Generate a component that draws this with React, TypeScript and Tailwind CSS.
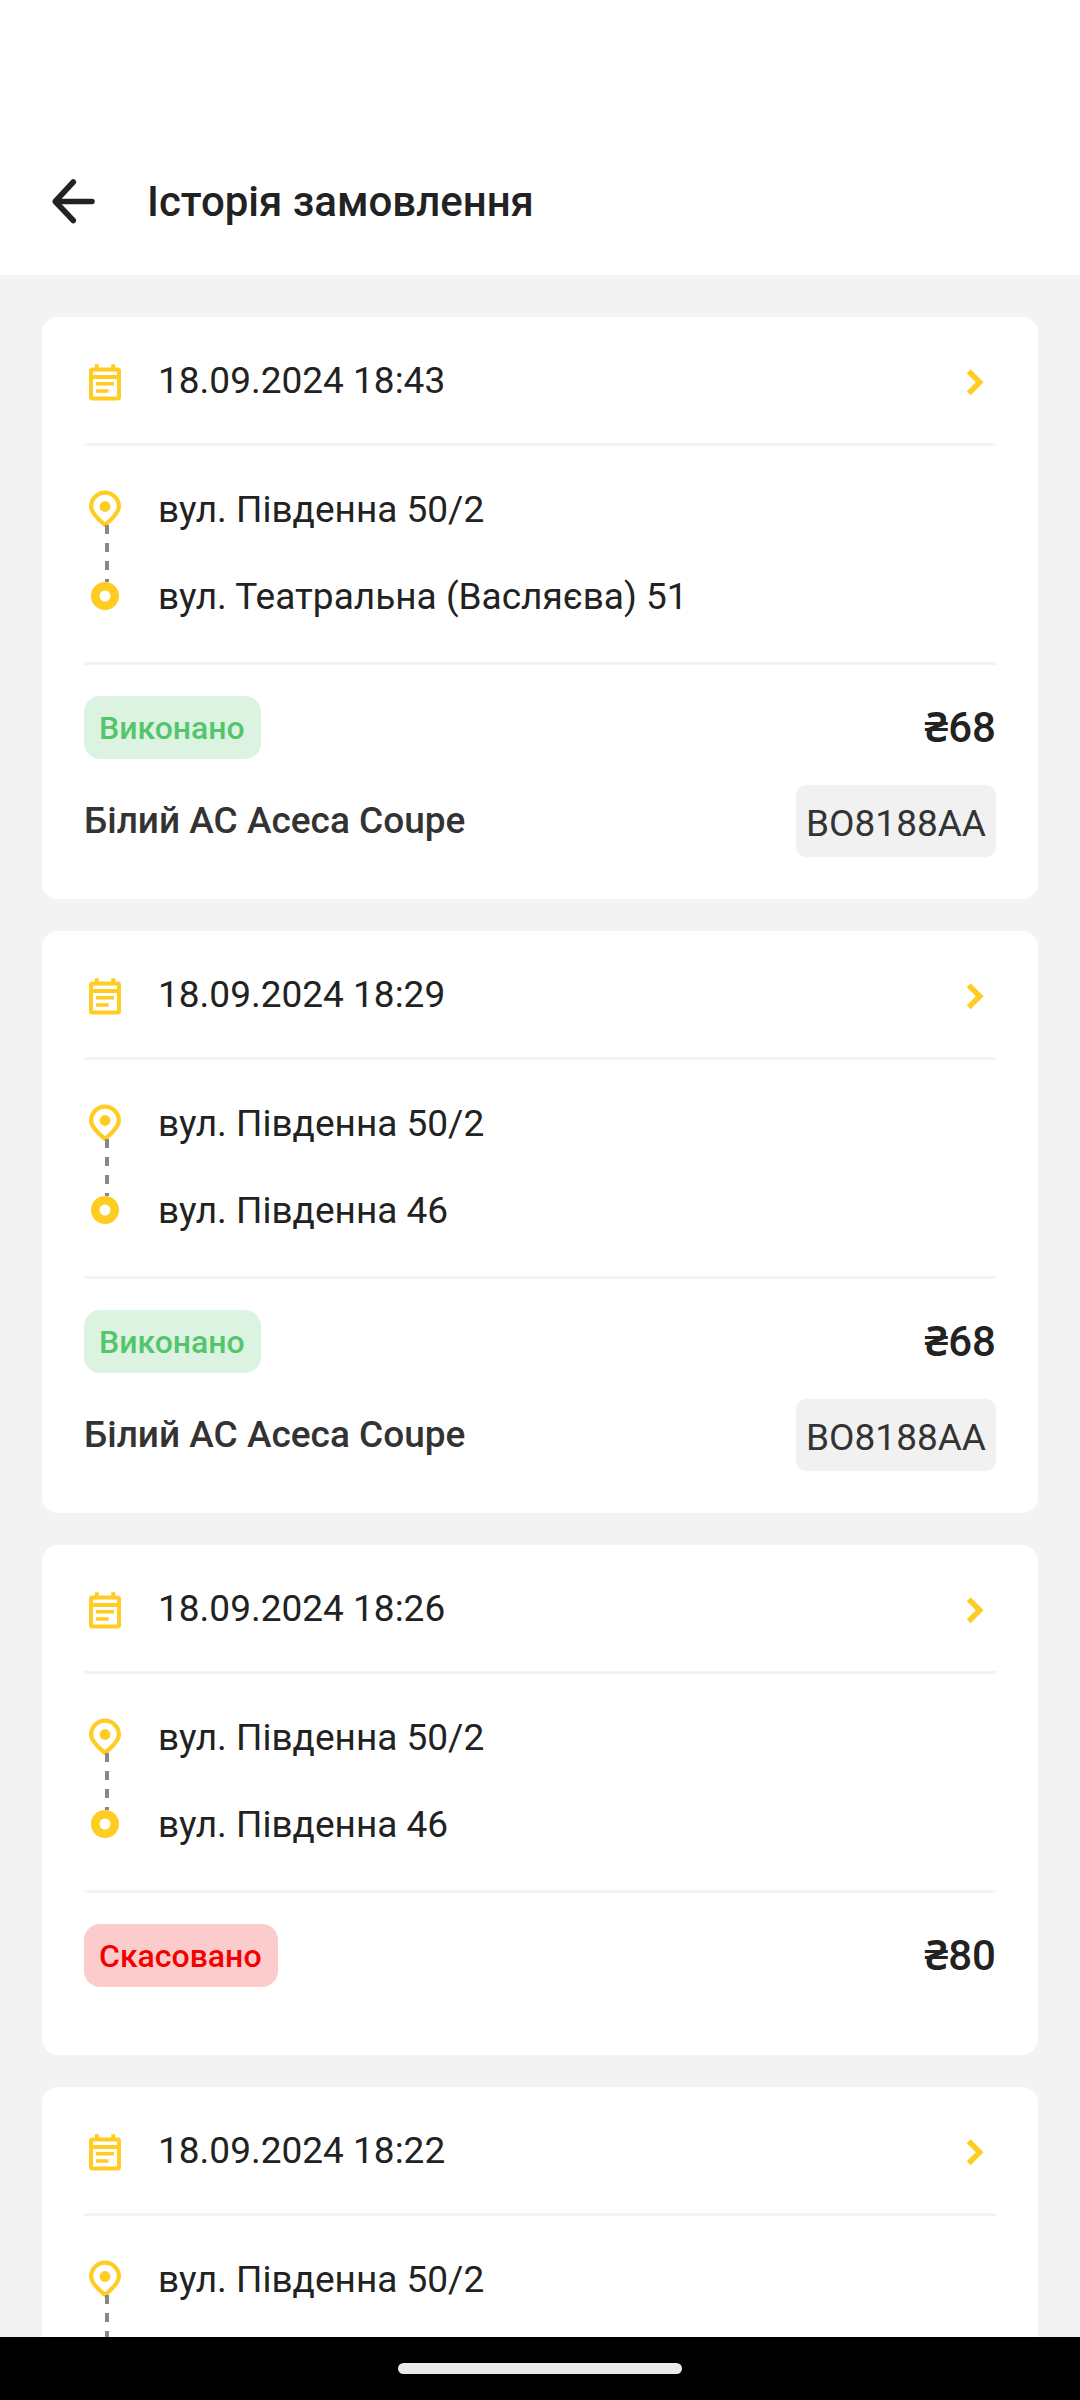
import React from 'react';

type Status = 'done' | 'cancelled';

interface Order {
  id: number;
  date: string;
  stops: string[];
  status?: Status;
  price?: number;
  car?: string;
  plate?: string;
}

const orders: Order[] = [
  {
    id: 1,
    date: '18.09.2024 18:43',
    stops: ['вул. Південна 50/2', 'вул. Театральна (Васляєва) 51'],
    status: 'done',
    price: 68,
    car: 'Білий AC Aceca Coupe',
    plate: 'BO8188AA',
  },
  {
    id: 2,
    date: '18.09.2024 18:29',
    stops: ['вул. Південна 50/2', 'вул. Південна 46'],
    status: 'done',
    price: 68,
    car: 'Білий AC Aceca Coupe',
    plate: 'BO8188AA',
  },
  {
    id: 3,
    date: '18.09.2024 18:26',
    stops: ['вул. Південна 50/2', 'вул. Південна 46'],
    status: 'cancelled',
    price: 80,
  },
  {
    id: 4,
    date: '18.09.2024 18:22',
    stops: ['вул. Південна 50/2'],
  },
];

const badges = {
  done: { label: 'Виконано', className: 'bg-[#dcf3e2] text-[#53c66c]' },
  cancelled: { label: 'Скасовано', className: 'bg-[#fccccc] text-[#f40000]' },
};

const ArrowLeft = () => (
  <svg width="63" height="63" viewBox="0 0 63 63" fill="none" stroke="currentColor" strokeWidth="5.6" strokeLinecap="round" strokeLinejoin="round">
    <path d="M50 31.5H14M31.3 12L13.2 31.5l18.1 19" />
  </svg>
);

const CalendarIcon = () => (
  <svg className="shrink-0" width="42" height="42" viewBox="0 0 42 42" fill="none" stroke="#ffcc22" strokeWidth="4">
    <rect x="7" y="9.5" width="28" height="29" rx="1.5" />
    <path d="M12.8 4.3v5M29.2 4.3v5M6 17h30" />
    <path d="M12 23.8h18M12 31.1h12.5" strokeWidth="3.5" />
  </svg>
);

const ChevronRight = () => (
  <svg width="42" height="42" viewBox="0 0 42 42" fill="none" stroke="#ffcc22" strokeWidth="5.5">
    <path d="M14.7 11.2L25.7 22.2L14.7 33.2" />
  </svg>
);

// Pin on top, dashed line, ring at the destination
const RouteIcon = () => (
  <svg className="shrink-0" width="42" height="129" viewBox="0 0 42 129" fill="none">
    <path
      d="M21 37C18 34.5 7.1 25.5 7.1 18.5a13.9 13.9 0 0 1 27.8 0C34.9 25.5 24 34.5 21 37Z"
      stroke="#ffcc22"
      strokeWidth="4.2"
      strokeLinejoin="round"
    />
    <circle cx="21" cy="18.5" r="5.4" fill="#ffcc22" />
    <path d="M23 37v57" stroke="#888888" strokeWidth="4" strokeDasharray="9 9" />
    <circle cx="21" cy="108" r="9.75" stroke="#ffcc22" strokeWidth="8.5" />
  </svg>
);

const OrderCard = ({ order }: { order: Order }) => {
  const badge = order.status && badges[order.status];

  return (
    <li className="rounded-2xl bg-white px-[42px]">
      <div className="flex items-center gap-8 border-b-3 border-[#f3f3f3] pt-[42px] pb-[41px]">
        <CalendarIcon />
        <span className="flex-1 text-[37px] leading-[43px]">{order.date}</span>
        <button aria-label="Деталі" className="cursor-pointer">
          <ChevronRight />
        </button>
      </div>

      <div className="flex items-start gap-8 pt-[42px] pb-11">
        <RouteIcon />
        <div className="flex min-h-[130px] flex-col gap-11 text-[37px] leading-[43px]">
          {order.stops.map((stop) => (
            <span key={stop}>{stop}</span>
          ))}
        </div>
      </div>

      {badge && (
        <div className="flex flex-col gap-[26px] border-t-3 border-[#f3f3f3] pt-[31px] pb-[42px]">
          <div className="flex items-center justify-between">
            <span className={`rounded-2xl pt-[2px] pr-4 pl-[15px] text-[32px] leading-[61px] font-medium ${badge.className}`}>
              {badge.label}
            </span>
            <span className="text-[42px] leading-[63px] font-medium">
              <span className="font-['Noto_Sans',sans-serif] leading-none font-semibold">₴</span>
              {order.price}
            </span>
          </div>
          <div className="flex items-center justify-between text-[#333333]">
            <span className="text-[37px] leading-[42px] font-medium">{order.car}</span>
            {order.plate && (
              <span className="rounded-[10px] bg-[#f1f1f1] px-[10px] pt-[15px] pb-[9px] text-[37px] leading-[48px]">
                {order.plate}
              </span>
            )}
          </div>
        </div>
      )}
    </li>
  );
};

const App = () => {
  return (
    <div className="flex h-screen flex-col bg-[#f3f3f3] font-['Roboto',sans-serif] text-[#222222]">
      <header className="flex items-center gap-[42px] bg-white px-[42px] pt-[170px] pb-[42px]">
        <button aria-label="Назад" className="cursor-pointer">
          <ArrowLeft />
        </button>
        <h1 className="text-[42px] leading-[63px] font-medium">Історія замовлення</h1>
      </header>

      <main className="min-h-0 flex-1 overflow-y-auto px-[42px] pt-[42px] [scrollbar-width:none]">
        <ul className="flex flex-col gap-8">
          {orders.map((order) => (
            <OrderCard key={order.id} order={order} />
          ))}
        </ul>
      </main>

      <footer className="flex h-[63px] shrink-0 items-center justify-center bg-black">
        <div className="h-[11px] w-[284px] rounded-full bg-[#eaeaea]" />
      </footer>
    </div>
  );
};

export default App;
